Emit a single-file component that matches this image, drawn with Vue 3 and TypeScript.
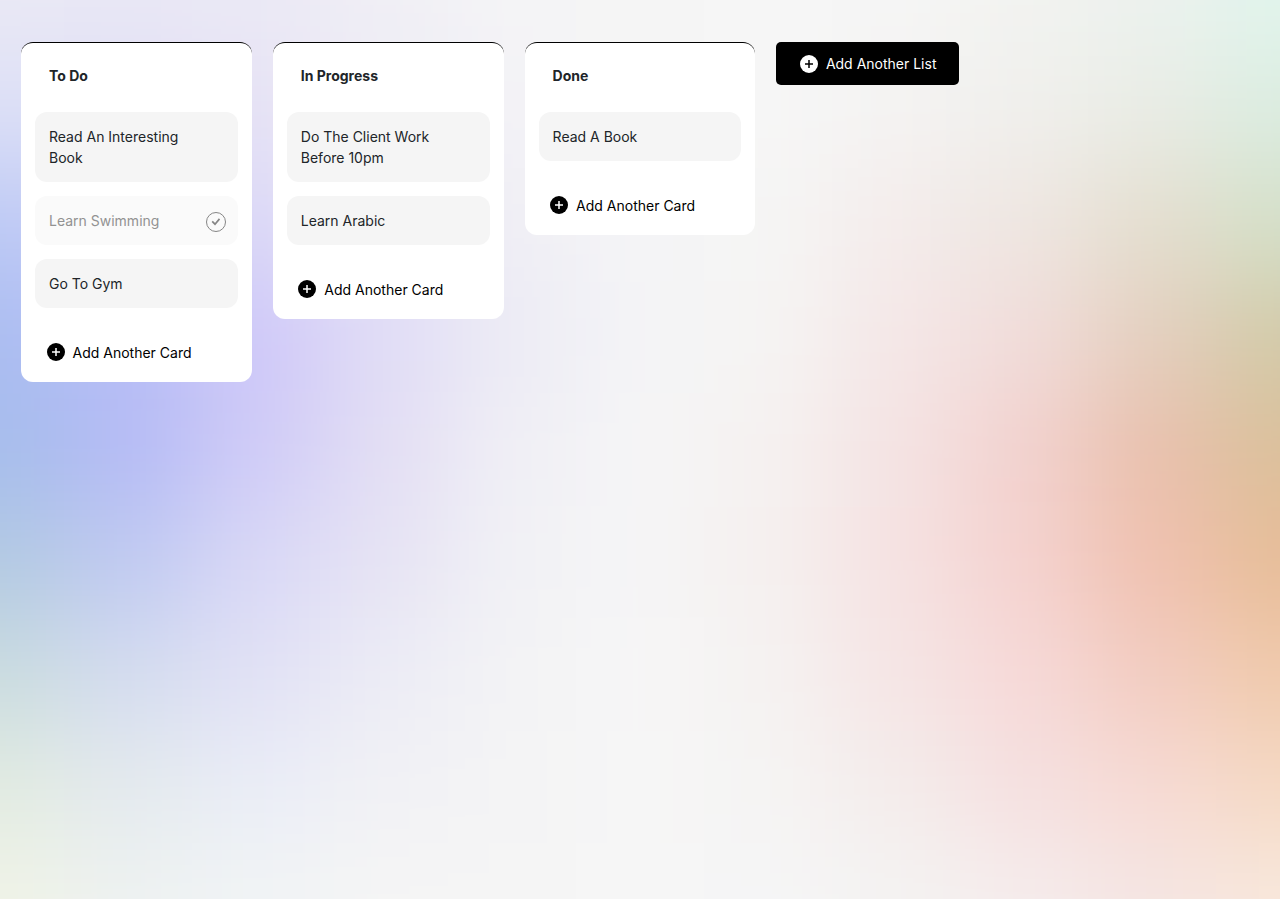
<script setup lang="ts">
interface Card {
  title: string
  done?: boolean
}

interface List {
  title: string
  cards: Card[]
}

const lists: List[] = [
  {
    title: 'To Do',
    cards: [
      { title: 'Read An Interesting Book' },
      { title: 'Learn Swimming', done: true },
      { title: 'Go To Gym' },
    ],
  },
  {
    title: 'In Progress',
    cards: [{ title: 'Do The Client Work Before 10pm' }, { title: 'Learn Arabic' }],
  },
  { title: 'Done', cards: [{ title: 'Read A Book' }] },
]

// Colour swatches of the backdrop, blurred together into a soft gradient mesh.
const mesh: string[] = [
  'eae9f5 e9e8f5 ebe9f5 f0eff5 f4f4f6 f5f5f5 f6f6f6 f5f5f5 f2f3f0 ecf2ee e1f4ec',
  'dcdff6 dfdcf6 e6e2f5 edebf5 f3f2f6 f6f6f6 f6f6f6 f4f3f2 f0efec e9ece5 dbece0',
  'bdcaf5 cdcbf6 dcd9f7 e6e2f5 f0eff5 f4f4f6 f5f5f4 f4eceb eee6e1 e4decf d4dfc8',
  'abbdf1 b7bdf6 cfc8f8 e0dcf6 ecebf5 f4f4f6 f5f4f3 f4e7e7 f1dcda e4cfbf d2caa8',
  'a6bdec b5bbf5 cfcbf7 e3def4 f0eff5 f5f5f6 f5f1f0 f4e3e3 f2d1ce e9c0ad dbc09b',
  'b3cae2 c0caf1 d9d8f6 e6e3f4 f1f1f5 f5f5f6 f5f0ef f5e2e2 f4d2cf f0c1b0 e7bd98',
  'cadcdf d4dcef e1e1f5 ececf5 f3f3f5 f6f6f6 f5f2f1 f5e5e5 f6d9d8 f2ccc1 f0caac',
  'e2ebe1 e4eaee eaedf6 f1f1f5 f4f4f5 f6f6f6 f5f4f3 f4eceb f5e0e0 f6dad4 f5d9c4',
  'f0f3e7 eef2f1 f1f4f5 f5f5f5 f5f5f5 f6f6f6 f5f5f6 f4f3f2 f5ecec f5e5e3 f8e8dc',
]
const swatches = mesh.flatMap((row) => row.split(' ').map((hex) => `#${hex}`))
</script>

<template>
  <main class="board">
    <div class="backdrop" aria-hidden="true">
      <i v-for="(color, index) in swatches" :key="index" :style="{ backgroundColor: color }"></i>
    </div>
    <section v-for="list in lists" :key="list.title" class="list">
      <h2 class="list-title">{{ list.title }}</h2>
      <div class="cards">
        <article v-for="card in list.cards" :key="card.title" class="card" :class="{ done: card.done }">
          <span class="card-title">{{ card.title }}</span>
          <svg v-if="card.done" class="check" viewBox="0 0 20 20" aria-hidden="true">
            <circle cx="10" cy="10" r="9.5" />
            <path d="M6.2 9.4 9 12.2 13.5 6.9" />
          </svg>
        </article>
      </div>
      <button class="add-card" type="button">
        <svg class="plus" viewBox="0 0 18 18" aria-hidden="true">
          <circle cx="9" cy="9" r="9" />
          <path d="M9 5v8M5 9h8" />
        </svg>
        <span>Add Another Card</span>
      </button>
    </section>
    <button class="add-list" type="button">
      <svg class="plus" viewBox="0 0 18 18" aria-hidden="true">
        <circle cx="9" cy="9" r="9" />
        <path d="M9 5v8M5 9h8" />
      </svg>
      <span>Add Another List</span>
    </button>
  </main>
</template>

<style>
html {
  font-size: 14px;
}

body {
  margin: 0;
}
</style>

<style scoped>
.board {
  position: relative;
  z-index: 0;
  box-sizing: border-box;
  height: 100vh;
  padding: 42px 21px;
  display: flex;
  align-items: flex-start;
  gap: 21px;
  overflow: hidden;
  font: 400 14px/21px Inter, sans-serif;
  color: #212529;
  background: #f6f6f6;
}

.backdrop {
  position: absolute;
  inset: -200px;
  z-index: -1;
  display: grid;
  grid-template-columns: 264px repeat(9, 1fr) 264px;
  grid-template-rows: 256px repeat(7, 1fr) 256px;
  filter: blur(46px);
}

.list {
  box-sizing: border-box;
  flex: 0 0 230.8px;
  padding: 0 14px 14px;
  border-top: 1px solid #000;
  border-radius: 12px;
  background: #fff;
}

.list-title {
  margin: 0;
  padding: 22px 14px 26px;
  font-size: 14px;
  line-height: 21px;
  font-weight: 700;
}

.cards {
  display: flex;
  flex-direction: column;
  gap: 14px;
}

.card {
  display: flex;
  align-items: center;
  justify-content: space-between;
  padding: 14px;
  border-radius: 12px;
  background: #f5f5f5;
}

.card-title {
  max-width: 152px;
}

.card.done {
  padding-right: 12px;
  color: #929292;
  background: #fafafa;
}

.check {
  width: 20px;
  height: 20px;
  flex: none;
  margin: 1px 0 -1px;
  fill: none;
  stroke: #858585;
}

.check path {
  stroke-width: 1.7;
}

button {
  display: flex;
  align-items: center;
  border: 0;
  font: inherit;
  white-space: nowrap;
  cursor: pointer;
}

.add-card {
  margin: 34px 0 0;
  padding: 0 11.5px 5px;
  gap: 8px;
  color: #000;
  background: transparent;
}

.plus {
  width: 18px;
  height: 18px;
  flex: none;
  fill: currentColor;
}

.plus path {
  fill: none;
  stroke: #fff;
  stroke-width: 1.5;
}

.add-card .plus {
  margin-top: -2px;
}

.add-list {
  height: 43px;
  padding: 0 22.5px 0 24px;
  gap: 7.5px;
  border-radius: 5px;
  color: #fff;
  background: #000;
}

.add-list .plus path {
  stroke: #000;
}
</style>
